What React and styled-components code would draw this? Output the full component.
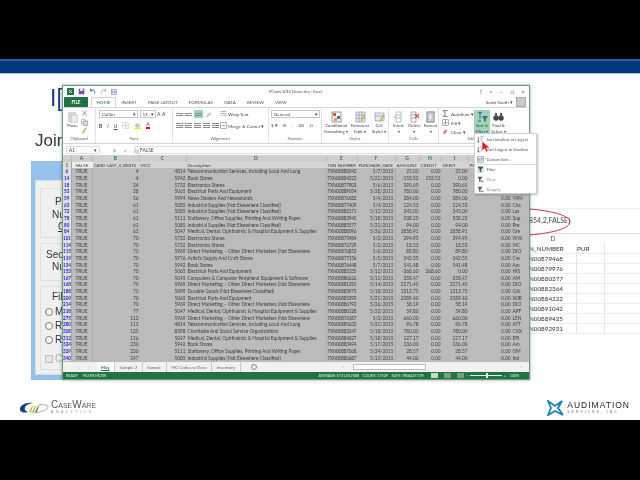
import React from 'react';
import styled, { createGlobalStyle } from 'styled-components';

const GlobalStyle = createGlobalStyle`
  html, body { margin: 0; padding: 0; background: #000; }
  * { box-sizing: border-box; }
`;

const Page = styled.div`
  width: 640px;
  height: 480px;
  position: relative;
  overflow: hidden;
  display: flex;
  flex-direction: column;
  background: #000;
  font-family: 'Liberation Sans', sans-serif;
  filter: blur(0.3px);
`;

const TopBlack = styled.div`
  height: 59px;
  background: #000;
`;

const BlueBar = styled.div`
  height: 15px;
  background: #013a7c;
  border-top: 2px solid #2a5f9c;
  border-bottom: 1px solid #a9c6de;
`;

const Slide = styled.div`
  height: 346px;
  background: #fff;
  display: flex;
  flex-direction: column;
  position: relative;
`;

const Stage = styled.div`
  flex: 1;
  display: flex;
  justify-content: space-between;
  min-height: 0;
`;

/* ---- what is behind the Excel window ---- */
const BackLeft = styled.div`
  width: 70px;
  margin-left: 31px;
  display: flex;
  flex-direction: column;
`;

const SlideTitle = styled.div`
  color: #1d3f7c;
  font-size: 23px;
  line-height: 24px;
  margin: 12px 0 0 19px;
  white-space: pre;
`;

const JoinText = styled.div`
  color: #333;
  font-size: 17px;
  line-height: 20px;
  margin: 21px 0 0 4px;
`;

const BackDialog = styled.div`
  margin-top: 10px;
  height: 219px;
  background: #96c1ec;
  padding: 19px 0 5px 4px;
  display: flex;
`;

const DialogInner = styled.div`
  flex: 1;
  background: #f0f0f0;
  border: 1px solid #dcdcdc;
  padding: 7px 0 8px 4px;
  display: flex;
  flex-direction: column;
  gap: 5px;
`;

const DialogGroup = styled.div`
  height: ${p => p.$h}px;
  flex: none;
  border: 1px solid #e0e0e0;
  padding-top: ${p => p.$top}px;
  display: flex;
  flex-direction: column;
  gap: ${p => p.$gap}px;
`;

const DialogLabel = styled.div`
  font-size: 10px;
  line-height: 12px;
  color: #333;
  padding-left: ${p => p.$indent}px;
  white-space: nowrap;
  text-decoration: ${p => (p.$under ? 'underline' : 'none')};
`;

const RadioRow = styled.div`
  display: flex;
  align-items: center;
  gap: 2px;
  padding-left: 4px;
  font-size: 10px;
  line-height: 12px;
  color: ${p => (p.$muted ? '#aaa' : '#333')};
  margin-top: ${p => p.$drop || 0}px;
`;

const RadioDot = styled.span`
  width: 8px;
  height: 8px;
  border: 1px solid #777;
  border-radius: 50%;
  background: #fff;
`;

const CheckBox = styled.span`
  width: 8px;
  height: 8px;
  border: 1px solid #bbb;
  background: #e6e6e6;
`;

const BackSheet = styled.div`
  width: 111px;
  margin-top: 134px;
  display: flex;
  flex-direction: column;
  position: relative;
`;

const BackFormulaRow = styled.div`
  height: 26px;
  padding: 7px 0 0 0;
  font-size: 7px;
  color: #444;
  font-family: Lato, sans-serif;
  white-space: nowrap;
  border-top: 1px solid #f0f0f0;
  border-bottom: 1px solid #e4e4e4;
`;

const Ellipse = styled.svg`
  position: absolute;
  left: 0;
  top: -1px;
`;

const BackHeadRow = styled.div`
  height: 10px;
  font-size: 7px;
  line-height: 10px;
  color: #555;
  text-align: center;
  width: 48px;
`;

const BackRow = styled.div`
  height: 10px;
  display: grid;
  grid-template-columns: 48px 28px;
  border-bottom: 1px solid #ececec;
  font-family: Lato, sans-serif;
  font-size: 6.3px;
  line-height: 9px;
  color: #333;
  white-space: nowrap;
  overflow: hidden;
`;

const BackCell = styled.div`
  overflow: hidden;
  border-right: 1px solid #e4e4e4;
`;

const Footer = styled.div`
  height: 40px;
  display: flex;
  justify-content: space-between;
  align-items: flex-start;
  padding: 20px 10px 0 19px;
`;

const Logo = styled.div`
  display: flex;
  align-items: center;
  gap: ${p => p.$gap}px;
`;

const LogoText = styled.div`
  display: flex;
  flex-direction: column;
`;

const LogoName = styled.div`
  color: ${p => p.$color};
  font-size: ${p => p.$size}px;
  line-height: ${p => p.$size}px;
  letter-spacing: ${p => p.$track}px;
  font-variant: ${p => (p.$caps ? 'small-caps' : 'normal')};
`;

const LogoSub = styled.div`
  color: ${p => p.$color};
  font-size: 3.5px;
  line-height: 5px;
  letter-spacing: ${p => p.$track}px;
  white-space: nowrap;
`;

/* ---- Excel window ---- */
const Excel = styled.div`
  position: absolute;
  left: 62px;
  top: 11px;
  width: 468px;
  height: 295px;
  background: #fff;
  border: 1px solid #6d9d86;
  box-shadow: 0 0 3px rgba(0, 0, 0, 0.4);
  display: flex;
  flex-direction: column;
  font-family: Lato, sans-serif;
  color: #444;
  overflow: hidden;
`;

const TitleBar = styled.div`
  height: 11px;
  display: flex;
  align-items: center;
  padding: 0 4px 0 4px;
  flex: none;
`;

const Qat = styled.div`
  width: 196px;
  display: flex;
  align-items: center;
  gap: 4px;
`;

const WindowTitle = styled.div`
  flex: 1;
  font-size: 3.9px;
  color: #555;
  padding-left: 6px;
`;

const WinControls = styled.div`
  display: flex;
  gap: 7.5px;
  font-size: 6px;
  color: #555;
  align-items: center;
`;

const TabBar = styled.div`
  height: 10px;
  display: flex;
  align-items: stretch;
  flex: none;
`;

const FileTab = styled.div`
  width: 24px;
  margin-left: 1px;
  margin-right: 3px;
  background: #217346;
  color: #fff;
  font-size: 4.6px;
  font-weight: 700;
  display: flex;
  align-items: center;
  justify-content: center;
`;

const RibbonTab = styled.div`
  font-size: 4.5px;
  display: flex;
  align-items: center;
  padding: 0 4.6px;
  color: ${p => (p.$active ? '#217346' : '#555')};
  background: #fff;
  border: 1px solid ${p => (p.$active ? '#d4d4d4' : 'transparent')};
  border-bottom: none;
  white-space: nowrap;
`;

const UserBox = styled.div`
  margin-left: auto;
  display: flex;
  align-items: center;
  gap: 3px;
  font-size: 4.6px;
  padding-right: 3px;
`;

const Avatar = styled.div`
  width: 10px;
  height: 10px;
  background: #c9c9c9;
  border: 1px solid #aaa;
`;

const Ribbon = styled.div`
  height: 37px;
  flex: none;
  display: flex;
  background: #fff;
  border-top: 1px solid #d4d4d4;
  border-bottom: 1px solid #d4d4d4;
`;

const RibbonGroup = styled.div`
  width: ${p => p.$w}px;
  display: flex;
  flex-direction: column;
  border-right: ${p => (p.$last ? 'none' : '1px solid #e2e2e2')};
`;

const GroupBody = styled.div`
  flex: 1;
  display: flex;
  gap: ${p => p.$gap || 0}px;
  padding: 2px 2px 0 ${p => p.$pad || 3}px;
  min-height: 0;
`;

const GroupLabel = styled.div`
  height: 7px;
  font-size: 4.2px;
  line-height: 6px;
  text-align: center;
  color: #666;
`;

const ToolColumn = styled.div`
  display: flex;
  flex-direction: column;
  gap: ${p => p.$gap || 2}px;
  width: ${p => (p.$w ? `${p.$w}px` : 'auto')};
`;

const ToolRow = styled.div`
  display: flex;
  align-items: center;
  gap: ${p => p.$gap || 3}px;
  font-size: 4.6px;
  white-space: nowrap;
`;

const ComboBox = styled.div`
  width: ${p => p.$w}px;
  height: 8px;
  border: 1px solid #c6c6c6;
  font-size: 4.6px;
  line-height: 6px;
  padding: 0 1px 0 2px;
  display: flex;
  justify-content: space-between;
  flex: none;
`;

const BigTool = styled.div`
  width: ${p => p.$w}px;
  height: 28px;
  display: flex;
  flex-direction: column;
  align-items: center;
  font-size: 4.3px;
  line-height: 6px;
  text-align: center;
  white-space: nowrap;
  background: ${p => (p.$on ? '#9fd5b7' : 'transparent')};
  padding-top: 1px;
  flex: none;
`;

const FontLetter = styled.span`
  font-size: 5px;
  font-weight: ${p => (p.$bold ? 700 : 400)};
  font-style: ${p => (p.$italic ? 'italic' : 'normal')};
  text-decoration: ${p => (p.$under ? 'underline' : 'none')};
`;

const ColorLetter = styled.span`
  font-size: 5px;
  line-height: 5px;
  border-bottom: 2px solid ${p => p.$color};
`;

const HighlightTool = styled.span`
  background: #9fd5b7;
  width: 9px;
  height: 8px;
  display: flex;
  flex-direction: column;
  justify-content: center;
  gap: 1px;
  padding: 0 1px;
`;

const AlignLine = styled.span`
  height: 1px;
  display: block;
  background: #8a8a8a;
`;

const AlignIcon = styled.span`
  width: 7px;
  display: flex;
  flex-direction: column;
  gap: 1px;
`;

const FormulaBar = styled.div`
  height: 11px;
  flex: none;
  display: flex;
  align-items: center;
  padding: 1px 0 0 3px;
  font-size: 5px;
  background: #fff;
`;

const NameBox = styled.div`
  width: 34px;
  height: 8px;
  border: 1px solid #ddd;
  font-size: 4.8px;
  line-height: 6px;
  padding: 0 2px;
  display: flex;
  justify-content: space-between;
`;

const FormulaButtons = styled.div`
  width: 35px;
  display: flex;
  gap: 6px;
  padding-left: 12px;
  color: #999;
  font-size: 6px;
`;

const FormulaInput = styled.div`
  flex: 1;
  height: 8px;
  border: 1px solid #ddd;
  font-size: 4.8px;
  line-height: 6px;
  padding: 0 4px;
`;

const Sheet = styled.div`
  height: 207px;
  flex: none;
  overflow: hidden;
  display: grid;
  grid-auto-rows: 6.667px;
  align-content: start;
  background: #bbb;
`;

const COLUMNS = '8.5px 21px 47px 47px 140px 31px 38px 24px 22px 27px 43px 20px';

const SheetRow = styled.div`
  display: grid;
  grid-template-columns: ${COLUMNS};
  background: ${p => (p.$head ? '#d5d5d5' : 'transparent')};
  font-size: ${p => (p.$head ? 4.6 : 4.75)}px;
  line-height: 6.6px;
  color: #3c3c3c;
  white-space: nowrap;
`;

const ColumnHead = styled.div`
  background: #cfcfcf;
  color: #217346;
  font-weight: 700;
  font-size: 5px;
  text-align: center;
  border-right: 1px solid #bcbcbc;
`;

const RowHead = styled.div`
  background: #dedede;
  color: ${p => (p.$plain ? '#217346' : '#1f1fd8')};
  font-size: 4.6px;
  font-weight: 700;
  text-align: center;
  overflow: hidden;
  border-right: 1px solid #8fb3a0;
`;

const Cell = styled.div`
  text-align: ${p => p.$align || 'left'};
  overflow: hidden;
  padding: 0 1px;
  letter-spacing: ${p => (p.$tight ? '-0.25px' : 'normal')};
  background: ${p => (p.$active ? '#eee' : 'transparent')};
  border-right: ${p => (p.$line ? '1px solid #ababab' : 'none')};
`;

const SheetTabs = styled.div`
  height: 10px;
  flex: none;
  background: #f1f1f1;
  display: flex;
  align-items: stretch;
  font-size: 4.4px;
  padding-left: 8px;
`;

const TabArrows = styled.div`
  width: 25.5px;
  display: flex;
  align-items: center;
  justify-content: center;
  gap: 8px;
  color: #aaa;
  font-size: 5px;
`;

const SheetTab = styled.div`
  padding: 0 4.5px;
  display: flex;
  align-items: center;
  white-space: nowrap;
  background: ${p => (p.$on ? '#fff' : 'transparent')};
  color: ${p => (p.$on ? '#217346' : '#666')};
  font-weight: ${p => (p.$on ? 700 : 400)};
  text-decoration: ${p => (p.$on ? 'underline' : 'none')};
  border-right: 1px solid #c8c8c8;
`;

const AddSheet = styled.div`
  margin: 2px 0 0 10px;
  width: 6px;
  height: 6px;
  border: 1px solid #888;
  border-radius: 50%;
`;

const ScrollTrack = styled.div`
  position: absolute;
  left: 280px;
  right: 8px;
  top: 1px;
  height: 7px;
  display: flex;
  align-items: center;
  background: #f1f1f1;
  font-size: 4px;
  color: #888;
`;

const ScrollThumb = styled.div`
  width: 73px;
  height: 6px;
  margin-left: 9px;
  background: #fff;
  border: 1px solid #bbb;
`;

const ScrollEnd = styled.div`
  margin-left: auto;
`;

const TabsWrap = styled.div`
  position: relative;
  flex: none;
`;

const StatusBar = styled.div`
  height: 7px;
  flex: none;
  background: #217346;
  color: #e6f1ea;
  font-size: 3.7px;
  display: flex;
  align-items: center;
  padding: 0 3px 0 3px;
  white-space: nowrap;
`;

const StatusGroup = styled.div`
  display: flex;
  align-items: center;
  gap: ${p => p.$gap}px;
  margin-left: ${p => p.$left || 0}px;
  flex: none;
`;

const ViewBox = styled.span`
  width: 7px;
  height: 5px;
  background: ${p => (p.$on ? '#c5dccd' : '#6f9f84')};
`;

const ZoomTrack = styled.div`
  width: 32px;
  height: 1px;
  background: #e6f1ea;
  position: relative;
`;

const ZoomKnob = styled.span`
  position: absolute;
  left: 16px;
  top: -2px;
  width: 2px;
  height: 5px;
  background: #fff;
`;

const ZoomValue = styled.span`
  margin-left: 3px;
`;

/* ---- sort menu ---- */
const Menu = styled.div`
  position: absolute;
  left: 474px;
  top: 59px;
  width: 63px;
  height: 61px;
  background: #fff;
  border: 1px solid #d0d0d0;
  box-shadow: 1px 1px 2px rgba(0, 0, 0, 0.25);
  display: flex;
  flex-direction: column;
  font-family: Lato, sans-serif;
  padding-top: 1px;
`;

const MenuItem = styled.div`
  height: 9.7px;
  flex: none;
  display: flex;
  align-items: center;
  gap: 2.5px;
  padding-left: 2px;
  font-size: 4px;
  color: ${p => (p.$dim ? '#8a8a8a' : '#555')};
  white-space: nowrap;
`;

const MenuRule = styled.div`
  height: 1px;
  flex: none;
  background: #ddd;
  margin: 0 0 0 2px;
`;

const MenuIconBox = styled.span`
  width: 7px;
  height: 7px;
  display: flex;
  align-items: center;
  justify-content: center;
  background: ${p => (p.$on ? '#cfe8da' : 'transparent')};
`;

const Cursor = styled.svg`
  position: absolute;
  left: 481px;
  top: 66px;
`;

/* ---- little drawn icons ---- */
const SmallIcon = ({ kind, size = 7 }) => {
  const s = { width: size, height: size, viewBox: '0 0 10 10', style: { flex: 'none' } };
  switch (kind) {
    case 'xl':
      return <svg {...s}><rect width="10" height="10" fill="#217346" /><path d="M3 3l4 4M7 3l-4 4" stroke="#fff" strokeWidth="1.2" /></svg>;
    case 'save':
      return <svg {...s}><rect x="1" y="1" width="8" height="8" fill="#7d4f9c" /><rect x="3" y="1" width="4" height="3" fill="#fff" /></svg>;
    case 'undo':
      return <svg {...s}><path d="M2 4c3-3 7-1 6 4M2 1v3h3" fill="none" stroke="#2a62a8" strokeWidth="1.3" /></svg>;
    case 'redo':
      return <svg {...s}><path d="M8 4C5 1 1 3 2 8M8 1v3H5" fill="none" stroke="#aaa" strokeWidth="1.2" /></svg>;
    case 'scissors':
      return <svg {...s}><path d="M2 1l6 7M8 1L2 8" stroke="#666" strokeWidth="1" /></svg>;
    case 'copy':
      return <svg {...s}><rect x="1" y="1" width="5" height="6" fill="#fff" stroke="#999" /><rect x="4" y="3" width="5" height="6" fill="#dfe6ec" stroke="#888" /></svg>;
    case 'brush':
      return <svg {...s}><path d="M8 1L4 5" stroke="#a77" strokeWidth="1.5" /><path d="M4 5L1 9h3l2-3z" fill="#d9a93a" /></svg>;
    case 'border':
      return <svg {...s}><path d="M1 1h8v8H1zM5 1v8M1 5h8" fill="none" stroke="#999" strokeDasharray="1 1" /></svg>;
    case 'fill':
      return <svg {...s}><path d="M2 5l3-3 3 3-3 3z" fill="#ddd" stroke="#777" /><rect y="8" width="10" height="2" fill="#ffe600" /></svg>;
    case 'wrap':
      return <svg {...s}><path d="M1 2h8M1 5h6c3 0 3 3 0 3H5M1 8h2" fill="none" stroke="#6b8fc0" /></svg>;
    case 'merge':
      return <svg {...s}><rect x="1" y="1" width="8" height="8" fill="none" stroke="#888" /><path d="M3 5h4" stroke="#3a78b8" /></svg>;
    case 'orient':
      return <svg {...s}><path d="M2 8l6-6M4 8l4-4" stroke="#888" /></svg>;
    case 'sigma':
      return <svg {...s}><path d="M8 1H2l3 4-3 4h6" fill="none" stroke="#555" strokeWidth="1.2" /></svg>;
    case 'filldown':
      return <svg {...s}><rect x="1" y="1" width="8" height="8" fill="none" stroke="#888" /><path d="M5 2v5M3 5l2 2 2-2" fill="none" stroke="#2a62a8" /></svg>;
    case 'eraser':
      return <svg {...s}><path d="M1 7l4-5 3 2-4 5z" fill="#d77a9a" /></svg>;
    case 'sortaz':
      return <svg {...s}><path d="M2 1v8M1 7l1 2 1-2" fill="none" stroke="#555" /><path d="M5 1h4M5 4h3M5 7h2" stroke="#3a78b8" /></svg>;
    case 'custom':
      return <svg {...s}><rect x="1" y="1" width="8" height="8" fill="#eef" stroke="#889" /><path d="M3 3v4M5 4h3M5 6h2" stroke="#2a62a8" /></svg>;
    case 'funnel':
      return <svg {...s}><path d="M1 1h8L6 5v4L4 8V5z" fill="#4a4a4a" /></svg>;
    case 'funnelx':
      return <svg {...s}><path d="M1 1h7L5 5v4L3 8V5z" fill="#5a5a5a" /><path d="M6 6l3 3M9 6L6 9" stroke="#d33" /></svg>;
    case 'funnelr':
      return <svg {...s}><path d="M1 1h7L5 5v4L3 8V5z" fill="#5a5a5a" /><path d="M6 8h3" stroke="#2a8a50" strokeWidth="1.5" /></svg>;
    default:
      return null;
  }
};

const BigIcon = ({ kind }) => {
  const s = { width: 11, height: 12, viewBox: '0 0 11 12' };
  switch (kind) {
    case 'paste':
      return <svg {...s}><rect x="1" y="1" width="8" height="10" fill="#d6d6d6" /><rect x="4" y="4" width="7" height="8" fill="#ececec" stroke="#c4c4c4" /></svg>;
    case 'cond':
      return <svg {...s}><rect x="1" y="1" width="9" height="10" fill="#f4f4f4" stroke="#999" /><rect x="2" y="2" width="3" height="3" fill="#d9534f" /><rect x="6" y="5" width="3" height="3" fill="#3a78b8" /><rect x="3" y="7" width="3" height="3" fill="#e8a33c" /></svg>;
    case 'table':
      return <svg {...s}><path d="M1 1h9v10H1zM1 4h9M1 7h9M4 1v10M7 1v10" fill="#eaf0f6" stroke="#8798aa" strokeWidth=".7" /><path d="M6 10l4-6" stroke="#d9a93a" strokeWidth="1.4" /></svg>;
    case 'styles':
      return <svg {...s}><path d="M1 2h9v8H1zM1 5h9" fill="#e3ecf4" stroke="#8798aa" strokeWidth=".7" /><path d="M6 10l4-6" stroke="#d9a93a" strokeWidth="1.4" /></svg>;
    case 'insert':
      return <svg {...s}><path d="M3 1h5v10H3zM3 4h5M3 7h5" fill="#fff" stroke="#bbb" /><path d="M1 5l2 1-2 1z" fill="#aaa" /></svg>;
    case 'delete':
      return <svg {...s}><path d="M2 1h5v10H2zM2 4h5M2 7h5" fill="#fff" stroke="#aaa" /><path d="M6 3l4 4M10 3L6 7" stroke="#d9534f" strokeWidth="1.2" /></svg>;
    case 'format':
      return <svg {...s}><rect x="2" y="1" width="7" height="10" fill="#dde6ee" stroke="#778" /><rect x="4" y="3" width="3" height="6" fill="#f7f7f7" stroke="#999" strokeWidth=".6" /></svg>;
    case 'sort':
      return <svg {...s}><path d="M3 1v7M1 2l2-1 2 1" fill="none" stroke="#2a62a8" /><path d="M1 10h3" stroke="#555" /><path d="M5 5h6L9 8v3L7 10V8z" fill="#4a6a7a" /></svg>;
    case 'find':
      return <svg {...s}><circle cx="3" cy="7" r="2.7" fill="#444" /><circle cx="8" cy="7" r="2.7" fill="#444" /><path d="M2 2h2v4H2zM7 2h2v4H7z" fill="#555" /></svg>;
    default:
      return null;
  }
};

const RAW_DESC = {
  tel: 'Telecommunication Services, Including Local And Long',
  book: 'Book Stores',
  elec: 'Electronics Stores',
  parts: 'Electrical Parts And Equipment',
  news: 'News Dealers And Newsstands',
  ind: 'Industrial Supplies (Not Elsewhere Classified)',
  stat: 'Stationery, Office Supplies, Printing And Writing Paper',
  med: 'Medical, Dental, Ophthalmic & Hospital Equipment & Supplies',
  direct: 'Direct Marketing \u2013 Other Direct Marketers (Not Elsewhere',
  art: "Artist's Supply And Craft Stores",
  comp: 'Computers & Computer Peripheral Equipment & Software',
  dur: 'Durable Goods (Not Elsewhere Classified)',
  char: 'Charitable And Social Service Organizations',
};

const ROWS = [
  [6, 4, 4814, 'tel', 'TXN00880042', '5/7/2015', '25.00', '0.00', '25.00', ''],
  [14, 4, 5942, 'book', 'TXN00884222', '5/21/2015', '-153.52', '153.52', '0.00', ''],
  [18, 24, 5732, 'elec', 'TXN00877903', '5/6/2015', '390.65', '0.00', '390.65', ''],
  [53, 28, 5065, 'parts', 'TXN00889054', '5/28/2015', '780.00', '0.00', '780.00', ''],
  [59, 56, 5994, 'news', 'TXN00876583', '5/4/2015', '384.00', '0.00', '384.00', 'YAM'],
  [63, 61, 5085, 'ind', 'TXN00877409', '5/4/2015', '124.53', '0.00', '124.53', 'Cha'],
  [72, 61, 5085, 'ind', 'TXN00882171', '5/12/2015', '345.00', '0.00', '345.00', 'Las'],
  [78, 61, 5111, 'stat', 'TXN00882945', '5/18/2015', '538.25', '0.00', '538.25', 'Sup'],
  [80, 61, 5085, 'ind', 'TXN00885577', '5/21/2015', '94.00', '0.00', '94.00', 'Pre'],
  [84, 61, 5047, 'med', 'TXN00888096', '5/26/2015', '1858.91', '0.00', '1858.91', 'Gre'],
  [101, 70, 5732, 'elec', 'TXN00875984', '5/3/2015', '294.95', '0.00', '294.95', 'WW'],
  [114, 70, 5732, 'elec', 'TXN00876729', '5/5/2015', '18.53', '0.00', '18.53', 'MC'],
  [115, 70, 5969, 'direct', 'TXN00876853', '5/6/2015', '89.80', '0.00', '89.80', 'DIO'],
  [119, 70, 5976, 'art', 'TXN00877156', '5/5/2015', '342.55', '0.00', '342.55', 'Cre'],
  [134, 70, 5942, 'book', 'TXN00876448', '5/7/2015', '541.48', '0.00', '541.48', 'Am'],
  [153, 70, 5065, 'parts', 'TXN00882135', '5/12/2015', '-368.60', '368.60', '0.00', 'HIS'],
  [167, 70, 5045, 'comp', 'TXN00880626', '5/11/2015', '358.47', '0.00', '358.47', 'AM'],
  [168, 70, 5969, 'direct', 'TXN00881292', '5/14/2015', '2271.45', '0.00', '2271.45', 'DIO'],
  [188, 70, 5099, 'dur', 'TXN00883975', '5/18/2015', '1313.75', '0.00', '1313.75', 'GAI'],
  [209, 70, 5065, 'parts', 'TXN00885399', '5/21/2015', '2589.40', '0.00', '2589.40', 'WIR'],
  [214, 70, 5969, 'direct', 'TXN00886792', '5/26/2015', '58.19', '0.00', '58.19', 'DIO'],
  [218, 77, 5047, 'med', 'TXN00880128', '5/22/2015', '59.80', '0.00', '59.80', 'APF'],
  [275, 113, 5969, 'direct', 'TXN00876587', '5/3/2015', '660.00', '0.00', '660.00', 'LEN'],
  [280, 113, 4814, 'tel', 'TXN00885633', '5/21/2015', '96.78', '0.00', '96.78', 'ATT'],
  [308, 135, 8398, 'char', 'TXN00883247', '5/18/2015', '780.00', '0.00', '780.00', 'CXX'],
  [312, 156, 5047, 'med', 'TXN00884027', '5/18/2015', '127.17', '0.00', '127.17', 'EPI'],
  [324, 230, 5942, 'book', 'TXN00883494', '5/17/2015', '136.00', '0.00', '136.00', 'Am'],
  [329, 230, 5111, 'stat', 'TXN00887068', '5/24/2015', '28.57', '0.00', '28.57', 'OM'],
  [340, 247, 5085, 'ind', 'TXN00880687', '5/15/2015', '44.00', '0.00', '44.00', 'Ind'],
];

const BACK_ROWS = ['N00879468', 'N00879976', 'N00880377', 'N00882364', 'N00884222', 'N00891042', 'N00889425', 'N00892931'];

function App() {
  return (
    <Page>
      <GlobalStyle />
      <TopBlack />
      <BlueBar />
      <Slide>
        <Stage>
          <BackLeft>
            <SlideTitle>I[</SlideTitle>
            <JoinText>Join</JoinText>
            <BackDialog>
              <DialogInner>
                <DialogGroup $h={50} $top={7} $gap={0.5}>
                  <DialogLabel $indent={14}>Pri</DialogLabel>
                  <DialogLabel $indent={11}>Nu</DialogLabel>
                  <DialogLabel $indent={17} $under>O</DialogLabel>
                </DialogGroup>
                <DialogGroup $h={38} $top={5} $gap={0}>
                  <DialogLabel $indent={5}>Secon</DialogLabel>
                  <DialogLabel $indent={11}>Nun</DialogLabel>
                </DialogGroup>
                <DialogGroup $h={84} $top={4} $gap={2}>
                  <DialogLabel $indent={11}>File</DialogLabel>
                  <RadioRow $drop={1}><RadioDot />Ma</RadioRow>
                  <RadioRow><RadioDot />Re</RadioRow>
                  <RadioRow><RadioDot />Re</RadioRow>
                  <RadioRow $drop={5} $muted><CheckBox />Cre</RadioRow>
                </DialogGroup>
              </DialogInner>
            </BackDialog>
          </BackLeft>
          <BackSheet>
            <BackFormulaRow>854,2,FALSE)</BackFormulaRow>
            <Ellipse width="60" height="30" viewBox="0 0 60 30">
              <path d="M0 2C25 4 41 9 41 15S25 26 0 28" fill="none" stroke="#c8344a" strokeWidth="1" />
            </Ellipse>
            <BackHeadRow>D</BackHeadRow>
            <BackRow>
              <BackCell>N_NUMBER</BackCell>
              <BackCell>PUR</BackCell>
            </BackRow>
            {BACK_ROWS.map(v => (
              <BackRow key={v}>
                <BackCell>{v}</BackCell>
                <BackCell />
              </BackRow>
            ))}
          </BackSheet>
        </Stage>
        <Footer>
          <Logo $gap={2}>
            <svg width="30" height="12" viewBox="0 0 30 12">
              <path d="M14 1C6 0 0 4 1 8c1 3 6 3 8 2C6 9 4 6 8 3c2-1 4-2 6-2z" fill="#1c3f7c" />
              <path d="M10 10l3-6h1l-2 6zM13 10l3-6h1l-2 6z" fill="#c9b23a" />
              <path d="M16 10l3-6h1l-2 6z" fill="#3a8f5a" />
              <path d="M19 3c5-1 10 0 10 2 0 3-8 6-17 6" fill="none" stroke="#555" strokeWidth=".5" />
            </svg>
            <LogoText>
              <LogoName $color="#555" $size={10} $track={0} $caps>CaseWare</LogoName>
              <LogoSub $color="#888" $track={2.6}>ANALYTICS</LogoSub>
            </LogoText>
          </Logo>
          <Logo $gap={3}>
            <svg width="17" height="16" viewBox="0 0 17 16">
              <path d="M1 1l7 5 7-5-4 7 5 7-8-4-7 4 3-7z" fill="none" stroke="#1f7fb8" strokeWidth="1.8" />
            </svg>
            <LogoText>
              <LogoName $color="#222" $size={8.5} $track={1}>AUDIMATION</LogoName>
              <LogoSub $color="#666" $track={2}>SERVICES, INC</LogoSub>
            </LogoText>
          </Logo>
        </Footer>

        <Excel>
          <TitleBar>
            <Qat>
              <SmallIcon kind="xl" />
              <SmallIcon kind="save" />
              <SmallIcon kind="undo" />
              <SmallIcon kind="redo" />
              <SmallIcon kind="custom" size={6} />
            </Qat>
            <WindowTitle>PCards 2015 Demo.xlsx - Excel</WindowTitle>
            <WinControls>
              <span>?</span>
              <span>▫</span>
              <span>–</span>
              <span>□</span>
              <span>×</span>
            </WinControls>
          </TitleBar>
          <TabBar>
            <FileTab>FILE</FileTab>
            <RibbonTab $active>HOME</RibbonTab>
            <RibbonTab>INSERT</RibbonTab>
            <RibbonTab>PAGE LAYOUT</RibbonTab>
            <RibbonTab>FORMULAS</RibbonTab>
            <RibbonTab>DATA</RibbonTab>
            <RibbonTab>REVIEW</RibbonTab>
            <RibbonTab>VIEW</RibbonTab>
            <UserBox>Scott Smith ▾<Avatar /></UserBox>
          </TabBar>
          <Ribbon>
            <RibbonGroup $w={33}>
              <GroupBody $gap={2} $pad={3}>
                <BigTool $w={13}><BigIcon kind="paste" />Paste</BigTool>
                <ToolColumn $gap={1.5}>
                  <SmallIcon kind="scissors" />
                  <SmallIcon kind="copy" />
                  <SmallIcon kind="brush" />
                </ToolColumn>
              </GroupBody>
              <GroupLabel>Clipboard</GroupLabel>
            </RibbonGroup>
            <RibbonGroup $w={77}>
              <GroupBody>
                <ToolColumn $gap={4}>
                  <ToolRow $gap={1.5}>
                    <ComboBox $w={39}>Calibri<span>▾</span></ComboBox>
                    <ComboBox $w={16}>11<span>▾</span></ComboBox>
                    <FontLetter>A</FontLetter>
                    <FontLetter>A</FontLetter>
                  </ToolRow>
                  <ToolRow $gap={5}>
                    <FontLetter $bold>B</FontLetter>
                    <FontLetter $italic>I</FontLetter>
                    <FontLetter $under>U</FontLetter>
                    <SmallIcon kind="border" />
                    <SmallIcon kind="fill" />
                    <ColorLetter $color="#e01010">A</ColorLetter>
                  </ToolRow>
                </ToolColumn>
              </GroupBody>
              <GroupLabel>Font</GroupLabel>
            </RibbonGroup>
            <RibbonGroup $w={96}>
              <GroupBody $gap={1}>
                <ToolColumn $gap={5}>
                  <ToolRow $gap={2}>
                    <AlignIcon><AlignLine /><AlignLine /></AlignIcon>
                    <AlignIcon><AlignLine /><AlignLine /></AlignIcon>
                    <HighlightTool><AlignLine /><AlignLine /></HighlightTool>
                    <SmallIcon kind="orient" />
                  </ToolRow>
                  <ToolRow $gap={2}>
                    <AlignIcon><AlignLine /><AlignLine /><AlignLine /></AlignIcon>
                    <AlignIcon><AlignLine /><AlignLine /><AlignLine /></AlignIcon>
                    <AlignIcon><AlignLine /><AlignLine /><AlignLine /></AlignIcon>
                    <AlignIcon><AlignLine /><AlignLine /><AlignLine /></AlignIcon>
                    <AlignIcon><AlignLine /><AlignLine /><AlignLine /></AlignIcon>
                  </ToolRow>
                </ToolColumn>
                <ToolColumn $gap={5}>
                  <ToolRow $gap={1}><SmallIcon kind="wrap" />Wrap Text</ToolRow>
                  <ToolRow $gap={1}><SmallIcon kind="merge" />Merge &amp; Center ▾</ToolRow>
                </ToolColumn>
              </GroupBody>
              <GroupLabel>Alignment</GroupLabel>
            </RibbonGroup>
            <RibbonGroup $w={53}>
              <GroupBody $pad={2}>
                <ToolColumn $gap={4}>
                  <ComboBox $w={49}>General<span>▾</span></ComboBox>
                  <ToolRow $gap={5}><span>$ ▾</span><span>%</span><span>,</span><span>.00</span><span>.0</span></ToolRow>
                </ToolColumn>
              </GroupBody>
              <GroupLabel>Number</GroupLabel>
            </RibbonGroup>
            <RibbonGroup $w={67}>
              <GroupBody $pad={1}>
                <BigTool $w={26}><BigIcon kind="cond" />Conditional<br />Formatting ▾</BigTool>
                <BigTool $w={22}><BigIcon kind="table" />Format as<br />Table ▾</BigTool>
                <BigTool $w={16}><BigIcon kind="styles" />Cell<br />Styles ▾</BigTool>
              </GroupBody>
              <GroupLabel>Styles</GroupLabel>
            </RibbonGroup>
            <RibbonGroup $w={50}>
              <GroupBody $pad={2} $gap={1}>
                <BigTool $w={15}><BigIcon kind="insert" />Insert<br />▾</BigTool>
                <BigTool $w={15}><BigIcon kind="delete" />Delete<br />▾</BigTool>
                <BigTool $w={15}><BigIcon kind="format" />Format<br />▾</BigTool>
              </GroupBody>
              <GroupLabel>Cells</GroupLabel>
            </RibbonGroup>
            <RibbonGroup $w={70} $last>
              <GroupBody $pad={3} $gap={1}>
                <ToolColumn $w={31} $gap={2}>
                  <ToolRow $gap={2}><SmallIcon kind="sigma" />AutoSum ▾</ToolRow>
                  <ToolRow $gap={2}><SmallIcon kind="filldown" />Fill ▾</ToolRow>
                  <ToolRow $gap={2}><SmallIcon kind="eraser" />Clear ▾</ToolRow>
                </ToolColumn>
                <BigTool $w={16} $on><BigIcon kind="sort" />Sort &amp;<br />Filter ▾</BigTool>
                <BigTool $w={15}><BigIcon kind="find" />Find &amp;<br />Select ▾</BigTool>
              </GroupBody>
              <GroupLabel>Editing</GroupLabel>
            </RibbonGroup>
          </Ribbon>
          <FormulaBar>
            <NameBox>A1<span>▾</span></NameBox>
            <FormulaButtons><span>✕</span><span>✓</span><span>fx</span></FormulaButtons>
            <FormulaInput>FALSE</FormulaInput>
          </FormulaBar>
          <Sheet>
            <SheetRow $head>
              <ColumnHead />
              {['A', 'B', 'C', 'D', 'E', 'F', 'G', 'H', 'I', 'J', ''].map(c => (
                <ColumnHead key={c}>{c}</ColumnHead>
              ))}
            </SheetRow>
            <SheetRow $head>
              <RowHead $plain>1</RowHead>
              <Cell $active $align="center">FALSE</Cell>
              <Cell $tight>CARD_LAST_4_DIGITS</Cell>
              <Cell>MCC</Cell>
              <Cell>Description</Cell>
              <Cell $tight>TXN_NUMBER</Cell>
              <Cell $tight>PURCHASE_DATE</Cell>
              <Cell>AMOUNT</Cell>
              <Cell>CREDIT</Cell>
              <Cell>DEBIT</Cell>
              <Cell>PST</Cell>
              <Cell />
            </SheetRow>
            {ROWS.map(r => (
              <SheetRow key={r[0]}>
                <RowHead>{r[0]}</RowHead>
                <Cell $align="center" $line>TRUE</Cell>
                <Cell $align="right">{r[1]}</Cell>
                <Cell $align="right">{r[2]}</Cell>
                <Cell $line>{RAW_DESC[r[3]]}</Cell>
                <Cell $tight>{r[4]}</Cell>
                <Cell $align="right" $line>{r[5]}</Cell>
                <Cell $align="right">{r[6]}</Cell>
                <Cell $align="right">{r[7]}</Cell>
                <Cell $align="right">{r[8]}</Cell>
                <Cell $align="right">0.00</Cell>
                <Cell>{r[9]}</Cell>
              </SheetRow>
            ))}
          </Sheet>
          <TabsWrap>
            <SheetTabs>
              <TabArrows><span>‹</span><span>›</span></TabArrows>
              <SheetTab $on>May</SheetTab>
              <SheetTab>Sample 2</SheetTab>
              <SheetTab>Sample</SheetTab>
              <SheetTab>MC Codes w Desc</SheetTab>
              <SheetTab>Inventory</SheetTab>
              <AddSheet />
            </SheetTabs>
            <ScrollTrack>
              <span>‹</span>
              <ScrollThumb />
              <ScrollEnd>›</ScrollEnd>
            </ScrollTrack>
          </TabsWrap>
          <StatusBar>
            <StatusGroup $gap={5}><span>READY</span><span>FILTER MODE</span></StatusGroup>
            <StatusGroup $gap={3.5} $left={212}>
              <span>AVERAGE: 6731.812588</span>
              <span>COUNT: 17529</span>
              <span>SUM: 78564377.99</span>
            </StatusGroup>
            <StatusGroup $gap={6} $left={7}>
              <ViewBox $on />
              <ViewBox />
              <ViewBox />
            </StatusGroup>
            <StatusGroup $gap={1.5} $left={3}>
              <span>-</span>
              <ZoomTrack><ZoomKnob /></ZoomTrack>
              <span>+</span>
              <ZoomValue>100%</ZoomValue>
            </StatusGroup>
          </StatusBar>
        </Excel>

        <Menu>
          <MenuItem><MenuIconBox><SmallIcon kind="sortaz" /></MenuIconBox>Sort Smallest to Largest</MenuItem>
          <MenuItem><MenuIconBox><SmallIcon kind="sortaz" /></MenuIconBox>Sort Largest to Smallest</MenuItem>
          <MenuItem><MenuIconBox><SmallIcon kind="custom" /></MenuIconBox>Custom Sort...</MenuItem>
          <MenuRule />
          <MenuItem><MenuIconBox $on><SmallIcon kind="funnel" /></MenuIconBox>Filter</MenuItem>
          <MenuItem $dim><MenuIconBox><SmallIcon kind="funnelx" /></MenuIconBox>Clear</MenuItem>
          <MenuItem $dim><MenuIconBox><SmallIcon kind="funnelr" /></MenuIconBox>Reapply</MenuItem>
        </Menu>
        <Cursor width="10" height="13" viewBox="0 0 10 13">
          <path d="M1 1v10l2.5-2.2L5.5 12l1.8-.8-2-3.2H9z" fill="#e01b1b" stroke="#fff" strokeWidth=".6" />
        </Cursor>
      </Slide>
    </Page>
  );
}

export default App;
